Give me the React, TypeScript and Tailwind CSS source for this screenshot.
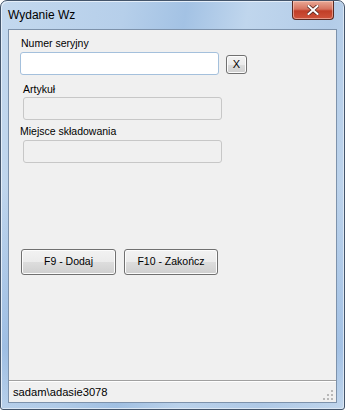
export default function App() {
  const lbl = "text-[10.5px] leading-[13px] text-black";
  const btn =
    "rounded-[3px] border border-[#707070] bg-[linear-gradient(180deg,#f2f2f2_0%,#ebebeb_50%,#dddddd_51%,#cfcfcf_100%)] shadow-[inset_0_0_0_1px_#fcfcfc] text-[10.5px] text-black flex items-center justify-center";
  return (
    <div className="w-[345px] h-[410px] flex flex-col rounded-t-[7px] rounded-b-[3px] border border-[#44556b] shadow-[inset_1px_1px_0_#e4eef9,inset_-1px_-1px_0_#dbe7f4] bg-[linear-gradient(180deg,rgba(0,0,0,0)_0%,rgba(0,0,0,0)_45%,rgba(80,135,205,0.28)_85%,rgba(150,180,215,0.1)_100%),linear-gradient(100deg,#c3d8ee_0%,#b6cfea_30%,#a3c2e4_45%,#c0d6ed_60%,#b3cce8_80%,#c6daef_100%)] font-['Liberation_Sans',Arial,sans-serif] overflow-hidden">
      {/* title bar */}
      <div className="h-[28px] flex items-start justify-between pl-[7px] pr-[10px] shrink-0">
        <div className="mt-[7px] text-[12px] leading-[15px] text-black">Wydanie Wz</div>
        <div className="w-[42px] h-[19px] rounded-b-[4px] border border-t-0 border-[#5a2a22] bg-[linear-gradient(180deg,#e9a996_0%,#d6735f_45%,#c13e27_55%,#cf533b_100%)] shadow-[inset_0_0_0_1px_rgba(255,220,210,0.5)] flex items-center justify-center">
          <svg width="12" height="10" viewBox="0 0 12 10">
            <path d="M1.5 1 L10.5 9 M10.5 1 L1.5 9" stroke="#5b2a22" strokeWidth="3.6" strokeLinecap="square" />
            <path d="M1.5 1 L10.5 9 M10.5 1 L1.5 9" stroke="#ffffff" strokeWidth="2" strokeLinecap="square" />
          </svg>
        </div>
      </div>
      {/* client */}
      <div className="flex-1 mx-[7px] mb-[6px] border border-[#7d92ab] bg-[#f0f0f0] flex flex-col">
        <div className="flex-1 flex flex-col">
          <div className={`${lbl} ml-[12px] mt-[7px]`}>Numer seryjny</div>
          <div className="flex items-start ml-[11px] mt-[2px]">
            <div className="w-[199px] h-[23px] rounded-[3px] border border-[#a4c0dc] bg-white" />
            <div className={`${btn} w-[21px] h-[19px] ml-[7px] mt-[3px] text-[11px]`}>X</div>
          </div>
          <div className={`${lbl} ml-[14px] mt-[8px]`}>Artykuł</div>
          <div className="w-[199px] h-[23px] ml-[14px] mt-[1px] rounded-[3px] border border-[#c7c7c7] bg-[#f0f0f0]" />
          <div className={`${lbl} ml-[11px] mt-[5px]`}>Miejsce składowania</div>
          <div className="w-[199px] h-[23px] ml-[14px] mt-[2px] rounded-[3px] border border-[#c7c7c7] bg-[#f0f0f0]" />
          <div className="flex ml-[12px] mt-[86px] gap-[8px]">
            <div className={`${btn} w-[95px] h-[26px]`}>F9 - Dodaj</div>
            <div className={`${btn} w-[94px] h-[26px]`}>F10 - Zakończ</div>
          </div>
        </div>
        <div className="h-[22px] border-t border-[#a0a0a0] shadow-[inset_0_1px_0_#ffffff] flex items-start justify-between pl-[4px] pr-[2px]">
          <div className="mt-[4px] text-[11.2px] leading-[14px] text-black">sadam\adasie3078</div>
          <svg width="11" height="11" viewBox="0 0 11 11" className="mt-[9px]">
            <rect x="8" y="0" width="2" height="2" fill="#b8b8b8" />
            <rect x="4" y="4" width="2" height="2" fill="#b8b8b8" />
            <rect x="8" y="4" width="2" height="2" fill="#b8b8b8" />
            <rect x="0" y="8" width="2" height="2" fill="#b8b8b8" />
            <rect x="4" y="8" width="2" height="2" fill="#b8b8b8" />
            <rect x="8" y="8" width="2" height="2" fill="#b8b8b8" />
          </svg>
        </div>
      </div>
    </div>
  );
}
